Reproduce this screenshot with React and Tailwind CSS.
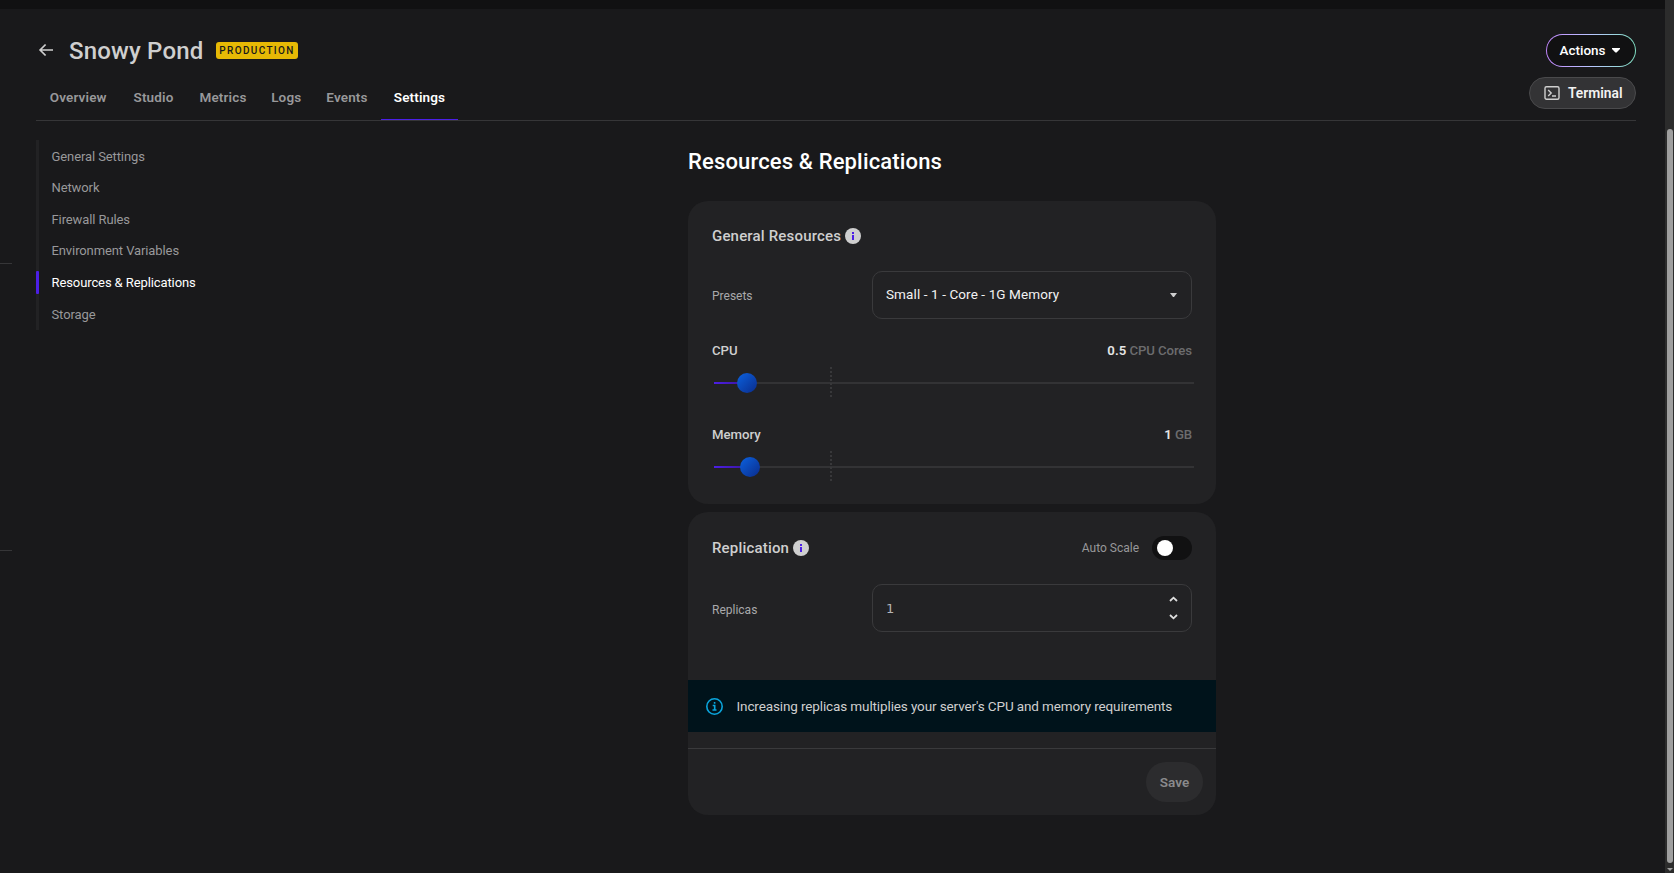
import { useState } from 'react';

const tabs = [
  { name: 'Overview', width: 'w-[84.5px]' },
  { name: 'Studio', width: 'w-[66px]' },
  { name: 'Metrics', width: 'w-[73px]' },
  { name: 'Logs', width: 'w-[53.5px]' },
  { name: 'Events', width: 'w-[68px]' },
  { name: 'Settings', width: 'w-[77px]' },
];

const sections = [
  'General Settings',
  'Network',
  'Firewall Rules',
  'Environment Variables',
  'Resources & Replications',
  'Storage',
];

function InfoDot() {
  return (
    <svg className="ml-1 size-4" viewBox="0 0 16 16">
      <circle cx="8" cy="8" r="8" fill="#cfcfcf" />
      <path d="M7 4h2v2H7zM7 7h2v5H7z" fill="#4c1fe6" />
    </svg>
  );
}

function Slider({ label, value, unit, thumb }) {
  return (
    <div className="h-[84px]">
      <div className="flex h-5 items-center justify-between pb-px text-[13.2px] leading-5 font-medium text-[#cfcfcf]">
        <span>{label}</span>
        <span className="flex gap-[3px] tracking-[-0.1px] text-[#6c6c6e]">
          <b className="font-semibold tracking-[0.1px] text-[#e6e6e6]">{value}</b>
          {unit}
        </span>
      </div>
      <div className="relative mt-[6px] ml-[2px] flex h-8 w-[480px] items-center">
        <div className="h-[2px] w-full bg-[#333335]" />
        <div
          className="absolute left-0 h-[2px] bg-linear-to-r from-[#4c1fe6] to-[#3a1499]"
          style={{ width: thumb }}
        />
        <div className="absolute top-0 left-[116px] h-[30px] w-[2px] bg-[repeating-linear-gradient(to_bottom,#38383a_0_2px,transparent_2px_4px)]" />
        <div
          className="absolute size-5 rounded-full bg-linear-to-br from-[#0b62e0] to-[#0a2c8c]"
          style={{ left: thumb - 10 }}
        />
      </div>
    </div>
  );
}

export default function App() {
  const [activeTab, setActiveTab] = useState('Settings');
  const [activeSection, setActiveSection] = useState('Resources & Replications');

  return (
    <div className="flex h-[873px] w-[1674px] overflow-hidden bg-[#19191b] font-[Roboto,sans-serif]">
      <div className="flex min-w-0 flex-1 flex-col">
        <div className="h-[9px] shrink-0 bg-[#111112]" />
        <div className="flex flex-1">
          {/* edge of the collapsed side menu */}
          <div className="w-3 pt-[254px]">
            <div className="h-px bg-[#363638]" />
            <div className="mt-[286px] h-px bg-[#363638]" />
          </div>

          <div className="ml-6 w-[1600px]">
            <header className="flex h-28 justify-between border-b border-[#363638]">
              <div>
                <div className="flex h-[83px] items-center">
                  <svg className="mb-px ml-[2px] size-4" viewBox="0 0 16 16" fill="none" stroke="#cfcfcf" strokeWidth="1.7">
                    <path d="M15 8H2M7.6 2.5 2.1 8l5.5 5.5" />
                  </svg>
                  <h1 className="ml-[15px] w-[134px] text-2xl font-medium tracking-[0.18px] whitespace-nowrap text-[#cfcfcf]">
                    Snowy Pond
                  </h1>
                  <span className="ml-[13px] flex h-[17px] w-[82px] items-center justify-center rounded-[3px] bg-[#e6b905] text-[10px] font-medium tracking-[1.35px] text-[#19191b]">
                    PRODUCTION
                  </span>
                </div>
                <nav className="flex h-7">
                  {tabs.map((tab) => (
                    <button
                      key={tab.name}
                      onClick={() => setActiveTab(tab.name)}
                      className={`${tab.width} flex justify-center border-b text-[13.5px] leading-[11px] font-semibold tracking-[0.15px] ${
                        activeTab === tab.name ? 'border-[#4c1fe6] text-white' : 'border-transparent text-[#98989a]'
                      }`}
                    >
                      {tab.name}
                    </button>
                  ))}
                </nav>
              </div>

              <div className="flex flex-col items-end gap-[10px] pt-[25px]">
                <button className="h-[33px] w-[90px] rounded-full bg-linear-to-r from-[#c084fc] via-[#b9c5ff] to-[#7fe0c3] p-px">
                  <span className="flex h-full items-center justify-center gap-[6px] rounded-full bg-[#111112] pr-[3px] text-[13.5px] font-medium text-white">
                    Actions
                    <svg className="h-[5px] w-2" viewBox="0 0 8 5" fill="#fff">
                      <path d="M0 0h8v1L4.6 4.6H3.4L0 1z" />
                    </svg>
                  </span>
                </button>
                <button className="flex h-8 w-[107px] items-center rounded-full border border-[#4a4a4c] bg-[#333335] pl-[14px] text-[13.8px] font-semibold text-[#f2f2f2]">
                  <svg className="mr-2 size-4" viewBox="0 0 16 16" fill="none" stroke="#cfcfcf" strokeWidth="1.4">
                    <rect x="1" y="1.7" width="14" height="12.6" rx="1.5" />
                    <path d="m4.2 5 3 3-3 3M8 11h4" />
                  </svg>
                  Terminal
                </button>
              </div>
            </header>

            <div className="flex">
              <aside className="mt-[19px] h-[190px] w-[652px] border-l-[3px] border-[#222224]">
                {sections.map((name) => (
                  <button
                    key={name}
                    onClick={() => setActiveSection(name)}
                    className={`-ml-[3px] flex h-[31.6px] items-center text-[13px] tracking-[-0.1px] ${
                      activeSection === name ? 'text-white' : 'text-[#98989a]'
                    }`}
                  >
                    <span className={`mr-[12.5px] h-[23px] w-[3px] rounded-[1px] ${activeSection === name ? 'bg-[#4c1fe6]' : ''}`} />
                    <span className="pt-px">{name}</span>
                  </button>
                ))}
              </aside>

              <main className="w-[528px]">
                <h2 className="mt-6 h-8 text-[22px] leading-[34px] font-medium tracking-[0.15px] whitespace-nowrap text-white">
                  Resources &amp; Replications
                </h2>

                <section className="mt-6 h-[303px] rounded-[20px] bg-[#222224] px-6 pt-[25px]">
                  <h3 className="flex h-5 items-center text-[15px] font-medium tracking-[0.18px] text-[#cfcfcf]">
                    General Resources
                    <InfoDot />
                  </h3>
                  <div className="mt-[25px] flex h-12 items-center">
                    <label className="w-40 pt-[2px] text-[12px] text-[#a9a9ab]">Presets</label>
                    <div className="flex h-12 flex-1 items-center justify-between rounded-[10px] border border-[#3a3a3c] px-[13px] text-[13.5px] tracking-[0.1px] text-[#f2f2f2]">
                      <span className="pb-px">Small - 1 - Core - 1G Memory</span>
                      <svg className="mr-[1px] h-1 w-[7px]" viewBox="0 0 7 4" fill="#cfcfcf">
                        <path d="M0 0h7L4 4H3z" />
                      </svg>
                    </div>
                  </div>
                  <div className="mt-[22px]">
                    <Slider label="CPU" value="0.5" unit="CPU Cores" thumb={33} />
                    <Slider label="Memory" value="1" unit="GB" thumb={36} />
                  </div>
                </section>

                <section className="mt-2 h-[303px] rounded-[20px] bg-[#222224]">
                  <div className="flex h-[72px] items-center justify-between px-6">
                    <h3 className="flex items-center text-[15px] font-medium tracking-[0.18px] text-[#cfcfcf]">
                      Replication
                      <InfoDot />
                    </h3>
                    <div className="flex items-center gap-[13px] text-[12px] text-[#98989a]">
                      Auto Scale
                      <span className="flex h-6 w-10 items-center rounded-full bg-[#111112] pl-[5px]">
                        <span className="size-4 rounded-full bg-white" />
                      </span>
                    </div>
                  </div>
                  <div className="flex h-12 items-center px-6">
                    <label className="w-40 pt-[3px] text-[12px] text-[#a9a9ab]">Replicas</label>
                    <div className="flex h-12 flex-1 items-center justify-between rounded-[10px] border border-[#3a3a3c] px-[13px] text-[#b5b5b7]">
                      <span className="pt-px font-['DejaVu_Sans',sans-serif] text-[13px]">1</span>
                      <svg className="h-6 w-[9px]" viewBox="0 0 9 24" fill="none" stroke="#dedede" strokeWidth="1.8">
                        <path d="M1 5l3.5-3.3L8 5M1 19l3.5 3.3L8 19" />
                      </svg>
                    </div>
                  </div>
                  <div className="mt-12 flex h-[52px] items-center bg-[#00131b] pl-[17.5px] text-[13.5px] tracking-[-0.12px] text-[#cfcfcf]">
                    <svg className="mr-[14px] size-[17px]" viewBox="0 0 17 17" fill="none" stroke="#0aa5dc" strokeWidth="1.6">
                      <circle cx="8.5" cy="8.5" r="7.7" />
                      <path d="M6.7 7.5h2v4.3M6.5 12h4M8.6 4v1.8" />
                    </svg>
                    Increasing replicas multiplies your server's CPU and memory requirements
                  </div>
                  <div className="mt-4 flex justify-end border-t border-[#3a3a3c] pt-[13px] pr-[13px]">
                    <button className="h-10 w-[57px] rounded-full bg-[#2c2c2e] text-[13.5px] font-semibold text-[#8a8a8c]">Save</button>
                  </div>
                </section>
              </main>
            </div>
          </div>
        </div>
      </div>

      {/* scrollbar */}
      <div className="flex w-[9px] flex-col items-center bg-[#2c2c2c] pt-[129px]">
        <div className="h-[734px] w-[6px] rounded-full bg-[#9f9f9f]" />
        <svg className="mt-[5px] h-[3px] w-[6px]" viewBox="0 0 6 3" fill="#9f9f9f">
          <path d="M0 0h6L3 3z" />
        </svg>
      </div>
    </div>
  );
}
